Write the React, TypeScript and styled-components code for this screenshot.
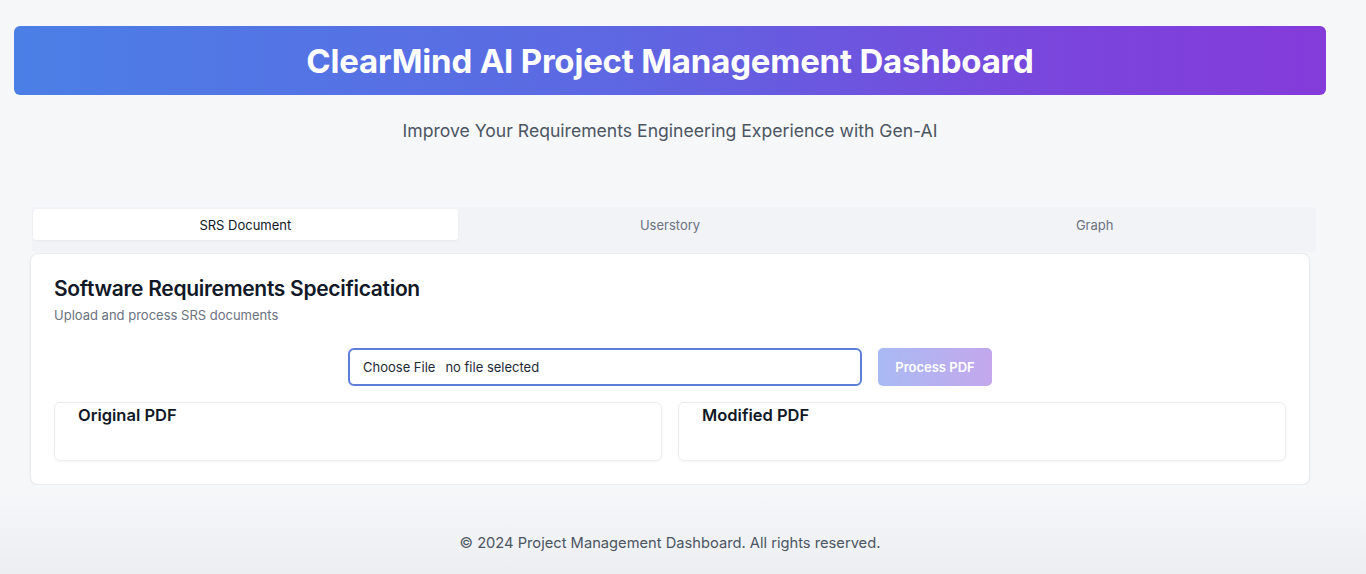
import React, { useState } from "react";
import styled, { createGlobalStyle } from "styled-components";

const GlobalStyle = createGlobalStyle`
  * {
    box-sizing: border-box;
  }

  body {
    margin: 0;
    font-family: Inter, "Noto Sans", sans-serif;
    background: #f6f7f9;
    color: #111827;
  }
`;

const Page = styled.div`
  min-height: 574px;
  display: flex;
  flex-direction: column;
`;

const Main = styled.main`
  flex-grow: 1;
  padding: 26px 40px 0 14px;
`;

const Banner = styled.header`
  height: 69px;
  border-radius: 6px;
  background: linear-gradient(90deg, #4b7fe6 0%, #5d68e2 45%, #7a45dc 80%, #843bda 100%);
  display: flex;
  align-items: center;
  justify-content: center;

  h1 {
    margin: 0;
    color: white;
    font-size: 33px;
    font-weight: 700;
    letter-spacing: -0.2px;
  }
`;

const Subtitle = styled.p`
  margin: 25px 0 0;
  text-align: center;
  font-size: 17.6px;
  color: #4b5563;
`;

const Content = styled.div`
  margin: 66px 16px 0 18px;
`;

const TabList = styled.div`
  display: grid;
  grid-template-columns: repeat(3, 1fr);
  padding: 2px 9px 12px 1px;
  background: #f1f3f7;
  border-radius: 4px;
  margin-right: -6px;
`;

const Tab = styled.button<{ $active?: boolean }>`
  height: 31px;
  border: none;
  border-radius: 3px;
  font-family: inherit;
  font-size: 13px;
  cursor: pointer;
  background: ${(p) => (p.$active ? "#ffffff" : "transparent")};
  color: ${(p) => (p.$active ? "#111827" : "#6b7280")};
  box-shadow: ${(p) => (p.$active ? "0 1px 2px rgba(0,0,0,0.05)" : "none")};
`;

const Card = styled.section`
  margin: 1px 0 0 -2px;
  background: white;
  border: 1px solid #e9eaee;
  border-radius: 8px;
  box-shadow: 0 1px 3px rgba(0, 0, 0, 0.04);
  padding: 22px 23px 23px;
`;

const CardTitle = styled.h2`
  margin: 0;
  font-size: 21px;
  font-weight: 600;
  letter-spacing: -0.3px;
`;

const CardSub = styled.p`
  margin: 6px 0 0;
  font-size: 13px;
  color: #6b7280;
`;

const UploadRow = styled.div`
  margin-top: 25px;
  display: flex;
  justify-content: center;
  gap: 16px;
`;

const FileBox = styled.label`
  width: 514px;
  height: 38px;
  border: 2px solid #5b7ed8;
  border-radius: 6px;
  display: flex;
  align-items: center;
  padding: 0 13px;
  font-size: 13px;
  color: #1f2937;
  gap: 10px;

  input {
    display: none;
  }
`;

const ProcessButton = styled.button`
  width: 114px;
  height: 38px;
  border: none;
  border-radius: 5px;
  background: linear-gradient(90deg, #a9baf3 0%, #c3a7ec 100%);
  color: white;
  font-family: inherit;
  font-size: 13px;
  font-weight: 600;
  cursor: not-allowed;
`;

const PdfGrid = styled.div`
  margin-top: 16px;
  display: grid;
  grid-template-columns: 1fr 1fr;
  gap: 16px;
`;

const PdfPanel = styled.div`
  height: 59px;
  border: 1px solid #ececef;
  border-radius: 6px;
  box-shadow: 0 1px 3px rgba(0, 0, 0, 0.05);
  padding: 2px 23px;

  h3 {
    margin: 0;
    font-size: 16.5px;
    font-weight: 600;
  }
`;

const Footer = styled.footer`
  height: 90px;
  display: flex;
  align-items: center;
  justify-content: center;
  padding: 26px 26px 0 0;
  background: linear-gradient(180deg, #f6f7f9 0%, #eceef1 100%);
  font-size: 14.7px;
  color: #4b5563;
`;

const tabs = ["SRS Document", "Userstory", "Graph"];

const App = () => {
  const [active, setActive] = useState<number>(0);

  return (
    <Page>
      <GlobalStyle />
      <Main>
        <Banner>
          <h1>ClearMind AI Project Management Dashboard</h1>
        </Banner>
        <Subtitle>
          Improve Your Requirements Engineering Experience with Gen-AI
        </Subtitle>

        <Content>
          <TabList>
            {tabs.map((t, i) => (
              <Tab key={t} $active={i === active} onClick={() => setActive(i)}>
                {t}
              </Tab>
            ))}
          </TabList>

          <Card>
            <CardTitle>Software Requirements Specification</CardTitle>
            <CardSub>Upload and process SRS documents</CardSub>

            <UploadRow>
              <FileBox>
                <input type="file" accept="application/pdf" />
                <span>Choose File</span>
                <span>no file selected</span>
              </FileBox>
              <ProcessButton disabled>Process PDF</ProcessButton>
            </UploadRow>

            <PdfGrid>
              <PdfPanel>
                <h3>Original PDF</h3>
              </PdfPanel>
              <PdfPanel>
                <h3>Modified PDF</h3>
              </PdfPanel>
            </PdfGrid>
          </Card>
        </Content>
      </Main>
      <Footer>© 2024 Project Management Dashboard. All rights reserved.</Footer>
    </Page>
  );
};

export default App;
